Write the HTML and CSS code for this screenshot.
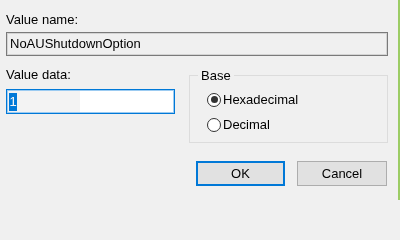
FILE: index.html
```html
<!DOCTYPE html>
<html lang="en">
<head>
<meta charset="utf-8">
<title>Edit DWORD Value</title>
<link rel="stylesheet" href="styles.css">
</head>
<body>
<div class="dialog">
  <div class="label">Value name:</div>
  <div class="name-box">NoAUShutdownOption</div>
  <div class="main">
    <div class="data-col">
      <div class="label">Value data:</div>
      <div class="data-box"><span class="sel">1</span></div>
    </div>
    <fieldset class="group">
      <legend class="legend">Base</legend>
      <div class="options">
        <div class="radio-row"><span class="radio checked"></span><span>Hexadecimal</span></div>
        <div class="radio-row"><span class="radio"></span><span>Decimal</span></div>
      </div>
    </fieldset>
  </div>
  <div class="buttons">
    <div class="btn btn-default">OK</div>
    <div class="btn">Cancel</div>
  </div>
  <div class="glow"></div>
</div>
</body>
</html>
```
FILE: styles.css
```css
html, body {
  margin: 0;
  padding: 0;
  background: #f0f0f0;
}
body {
  font-family: "Liberation Sans", Arial, sans-serif;
  font-size: 13px;
  color: #000;
}
.dialog {
  position: relative;
  width: 400px;
  height: 200px;
  box-sizing: border-box;
  border-right: 2px solid #9ccc65;
  padding: 12px 11px 0 6px;
  display: flex;
  flex-direction: column;
  overflow: hidden;
}
.label {
  line-height: 16px;
  height: 16px;
}
.name-box {
  margin-top: 4px;
  width: 382px;
  height: 24px;
  box-sizing: border-box;
  border: 1px solid #7a7a7a;
  box-shadow: inset 0 0 0 1px #d4d4d4;
  padding-left: 3px;
  line-height: 22px;
  background: #f0f0f0;
}
.main {
  margin-top: 10px;
  display: grid;
  grid-template-columns: 169px 199px;
  column-gap: 14px;
  align-items: start;
}
.data-col {
  padding-top: 1px;
}
.data-box {
  margin-top: 6px;
  height: 25px;
  box-sizing: border-box;
  border: 1px solid #0078d7;
  box-shadow: inset 0 0 0 1px #9ccbf1;
  background: #fff;
  padding-left: 2px;
  display: flex;
  align-items: center;
}
.sel {
  display: inline-block;
  background: #0078d7;
  color: #fff;
  line-height: 18px;
  height: 18px;
  padding: 0 0.5px;
}
.group {
  margin: 0;
  padding: 0;
  border: 1px solid #dcdcdc;
  min-width: 0;
}
.legend {
  margin-left: 8px;
  padding: 2px 3px 0;
  line-height: 16px;
}
.options {
  padding: 3px 0 5px 17px;
}
.radio-row {
  height: 25px;
  display: flex;
  align-items: center;
  gap: 2px;
  line-height: 16px;
}
.radio {
  width: 14px;
  height: 14px;
  box-sizing: border-box;
  border: 1px solid #333;
  border-radius: 50%;
  background: #fff;
  display: flex;
  align-items: center;
  justify-content: center;
}
.radio.checked::after {
  content: "";
  width: 7px;
  height: 7px;
  border-radius: 50%;
  background: #333;
}
.buttons {
  margin-top: 18px;
  display: flex;
  justify-content: flex-end;
  gap: 12px;
}
.btn {
  width: 90px;
  height: 25px;
  box-sizing: border-box;
  border: 1px solid #adadad;
  background: #e1e1e1;
  text-align: center;
  line-height: 23px;
}
.btn-default {
  width: 89px;
  border: 2px solid #0078d7;
  line-height: 21px;
}
.glow {
  position: absolute;
  left: 1px;
  top: 61px;
  width: 79px;
  height: 59px;
  background: #f3f3f3;
  mix-blend-mode: darken;
  pointer-events: none;
}
```
